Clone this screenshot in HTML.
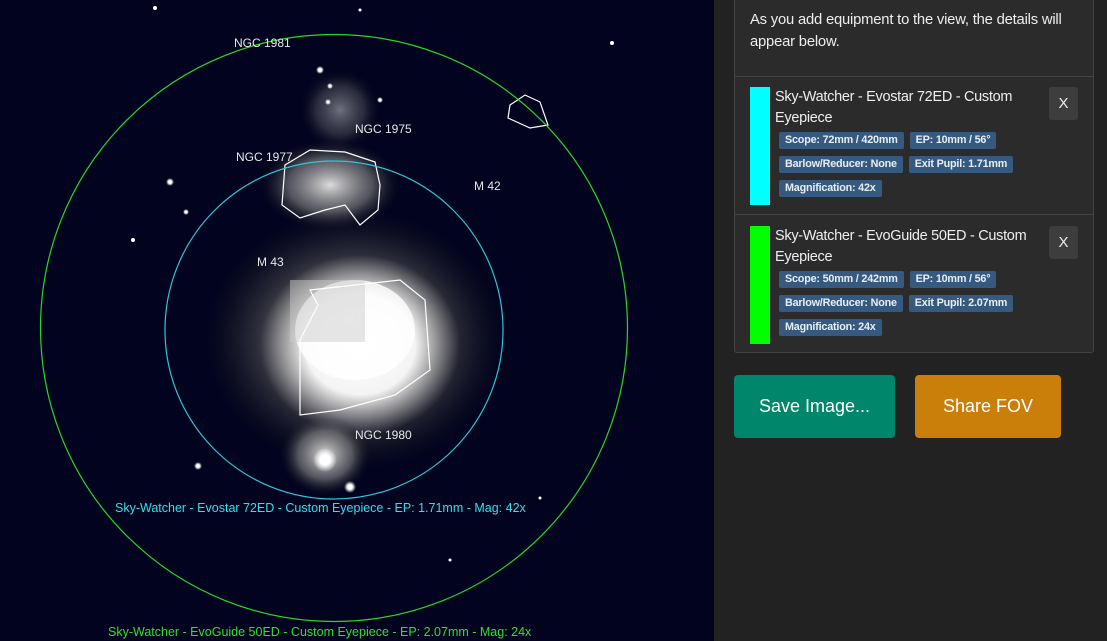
<!DOCTYPE html>
<html><head><meta charset="utf-8"><style>
*{margin:0;padding:0;box-sizing:border-box}
html,body{width:1107px;height:641px;overflow:hidden}
body{background:#222;font-family:"Liberation Sans",sans-serif;position:relative}
#sky{position:absolute;left:0;top:0;width:714px;height:641px;background:#02031e}
#panel{position:absolute;left:714px;top:0;width:393px;height:641px;background:#222}
.card{position:absolute;left:20px;top:-5px;width:360px;height:358px;background:#2b2b2b;border:1px solid #444;border-radius:3px}
.intro{position:absolute;left:15px;top:13px;width:340px;color:#eee;font-size:14.8px;line-height:22px;letter-spacing:-0.2px}
.sep{position:absolute;left:0;right:0;height:1px;background:#444}
.item{position:absolute;left:15px;width:340px}
.bar{position:absolute;left:0;top:0;width:20px;height:118px}
.title{position:absolute;left:25px;top:0;width:280px;color:#eee;font-size:14.5px;line-height:21px;letter-spacing:-0.3px}
.x{position:absolute;left:299px;top:0;width:29px;height:33px;background:#3d3d3d;border-radius:3px;color:#eee;font-size:15px;text-align:center;line-height:33px}
.tags{position:absolute;left:29px;top:45px;width:290px}
.row{display:flex;gap:6px;height:17px;margin-bottom:7px}
.tag{display:block;background:#365a7f;color:#e8eef5;font-size:10.8px;font-weight:bold;padding:0 6px;height:17px;line-height:17px;border-radius:2px;white-space:nowrap;letter-spacing:-0.2px}
.btn{position:absolute;top:375px;height:63px;border-radius:4px;color:#fff;font-size:18px;text-align:center;line-height:63px}
</style></head><body>
<div id="sky">
<svg width="714" height="641" viewBox="0 0 714 641">
<defs>
<radialGradient id="neb" cx="0.5" cy="0.5" r="0.5">
<stop offset="0" stop-color="#999"/><stop offset="0.5" stop-color="#666" stop-opacity="0.8"/><stop offset="1" stop-color="#222" stop-opacity="0"/></radialGradient>
<radialGradient id="core" cx="0.5" cy="0.5" r="0.5">
<stop offset="0" stop-color="#fff"/><stop offset="0.55" stop-color="#f4f4f4"/><stop offset="1" stop-color="#bbb" stop-opacity="0"/></radialGradient>
<radialGradient id="neb2" cx="0.5" cy="0.5" r="0.5">
<stop offset="0" stop-color="#ddd"/><stop offset="0.6" stop-color="#888" stop-opacity="0.6"/><stop offset="1" stop-color="#222" stop-opacity="0"/></radialGradient>
<radialGradient id="st" cx="0.5" cy="0.5" r="0.5"><stop offset="0" stop-color="#fff"/><stop offset="0.4" stop-color="#fff"/><stop offset="1" stop-color="#fff" stop-opacity="0"/></radialGradient>
</defs>
<ellipse cx="355" cy="340" rx="150" ry="130" fill="url(#neb)"/>
<ellipse cx="360" cy="345" rx="100" ry="90" fill="url(#core)"/>
<ellipse cx="355" cy="330" rx="60" ry="50" fill="#fff" opacity="0.8"/>
<ellipse cx="330" cy="185" rx="70" ry="45" fill="url(#neb2)"/>
<ellipse cx="325" cy="455" rx="45" ry="40" fill="url(#neb2)"/>
<ellipse cx="340" cy="110" rx="40" ry="40" fill="url(#neb2)" opacity="0.5"/>
<rect x="290" y="280" width="75" height="62" fill="#ccc" opacity="0.5"/>
<circle cx="325" cy="460" r="12" fill="url(#st)"/>
<circle cx="350" cy="487" r="6" fill="url(#st)"/>
<circle cx="198" cy="466" r="4" fill="url(#st)"/>
<circle cx="170" cy="182" r="4" fill="url(#st)"/>
<circle cx="186" cy="212" r="3" fill="url(#st)"/>
<circle cx="320" cy="70" r="4" fill="url(#st)"/>
<circle cx="330" cy="86" r="3" fill="url(#st)"/>
<circle cx="380" cy="100" r="3" fill="url(#st)"/>
<circle cx="328" cy="102" r="3" fill="url(#st)"/>
<circle cx="155" cy="8" r="2" fill="#fff"/>
<circle cx="612" cy="43" r="2" fill="#fff"/>
<circle cx="133" cy="240" r="2" fill="#fff"/>
<circle cx="360" cy="10" r="1.5" fill="#fff"/>
<circle cx="540" cy="498" r="1.5" fill="#fff"/>
<circle cx="450" cy="560" r="1.5" fill="#fff"/>
<path d="M285 165 L310 150 L345 152 L375 162 L380 185 L378 210 L360 225 L345 205 L325 210 L300 218 L282 205 Z" fill="none" stroke="#fff" stroke-width="1.2"/>
<path d="M310 290 L400 280 L425 300 L430 370 L395 395 L340 410 L300 415 L300 340 L318 305 Z" fill="none" stroke="#fff" stroke-width="1.2"/>
<path d="M510 105 L525 95 L540 102 L548 125 L530 128 L508 118 Z" fill="none" stroke="#fff" stroke-width="1.2"/>
<circle cx="334" cy="328" r="293.5" fill="none" stroke="#28d828" stroke-width="1.2"/>
<circle cx="334" cy="330" r="169" fill="none" stroke="#2cc8d8" stroke-width="1.2"/>
<g font-family="Liberation Sans,sans-serif" font-size="12" fill="#e8e8e8">
<text x="234" y="47">NGC 1981</text>
<text x="355" y="133">NGC 1975</text>
<text x="236" y="161">NGC 1977</text>
<text x="474" y="190">M 42</text>
<text x="257" y="266">M 43</text>
<text x="344" y="323" font-size="10">θ1</text>
<text x="355" y="439">NGC 1980</text>
</g>
<text x="115" y="512" font-family="Liberation Sans,sans-serif" font-size="12.5" fill="#2ee0f0">Sky-Watcher - Evostar 72ED - Custom Eyepiece - EP: 1.71mm - Mag: 42x</text>
<text x="108" y="636" font-family="Liberation Sans,sans-serif" font-size="12.5" fill="#30e030">Sky-Watcher - EvoGuide 50ED - Custom Eyepiece - EP: 2.07mm - Mag: 24x</text>
</svg>
</div>
<div id="panel">
<div class="card">
<div class="intro">As you add equipment to the view, the details will appear below.</div>
<div class="sep" style="top:80px"></div>
<div class="item" style="top:91px">
<div class="bar" style="background:#00ffff"></div>
<div class="title">Sky-Watcher - Evostar 72ED - Custom Eyepiece</div>
<div class="x">X</div>
<div class="tags"><div class="row"><span class="tag">Scope: 72mm / 420mm</span><span class="tag">EP: 10mm / 56°</span></div><div class="row"><span class="tag">Barlow/Reducer: None</span><span class="tag">Exit Pupil: 1.71mm</span></div><div class="row"><span class="tag">Magnification: 42x</span></div></div>
</div>
<div class="sep" style="top:218px"></div>
<div class="item" style="top:230px">
<div class="bar" style="background:#00ff00"></div>
<div class="title">Sky-Watcher - EvoGuide 50ED - Custom Eyepiece</div>
<div class="x">X</div>
<div class="tags"><div class="row"><span class="tag">Scope: 50mm / 242mm</span><span class="tag">EP: 10mm / 56°</span></div><div class="row"><span class="tag">Barlow/Reducer: None</span><span class="tag">Exit Pupil: 2.07mm</span></div><div class="row"><span class="tag">Magnification: 24x</span></div></div>
</div>
</div>
<div class="btn" style="left:20px;width:161px;background:#00876b">Save Image...</div>
<div class="btn" style="left:201px;width:146px;background:#c97f0a">Share FOV</div>
</div>
</body></html>
